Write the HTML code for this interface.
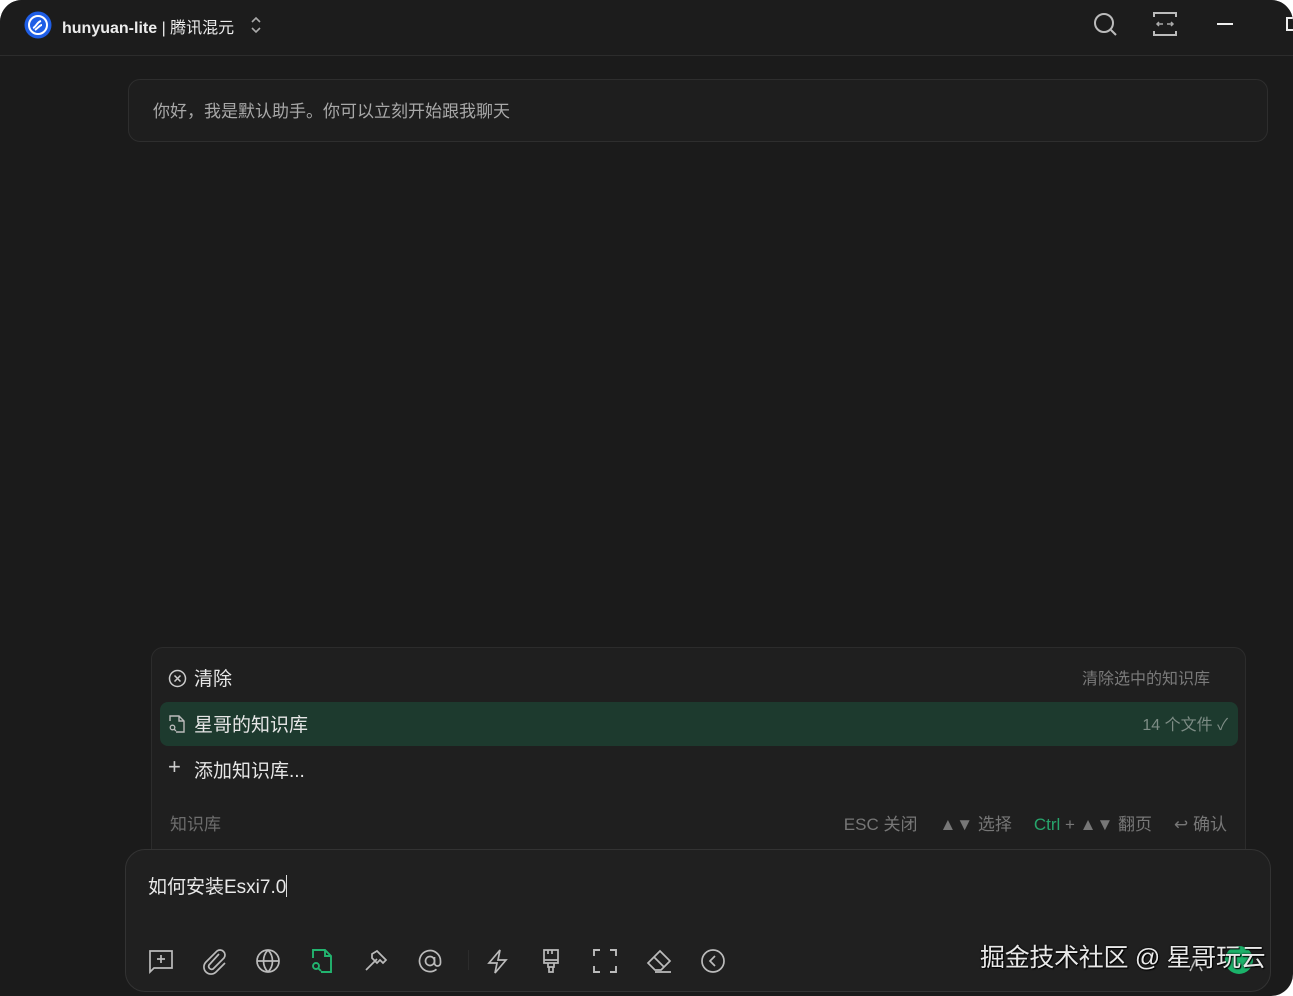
<!DOCTYPE html>
<html><head><meta charset="utf-8"><style>
*{box-sizing:border-box;margin:0;padding:0}
html,body{width:1293px;height:996px;overflow:hidden;background:#fff}
body{font-family:"Liberation Sans","Noto Sans CJK SC",sans-serif;position:relative}
.win{position:absolute;left:0;top:0;width:1293px;height:996px;background:#1b1b1b;border-radius:22px 22px 22px 0;overflow:hidden}
.hdr{position:absolute;left:0;top:0;width:100%;height:56px;border-bottom:1px solid #2c2c2c;background:#1c1c1c}
.abs{position:absolute}
.greet{left:128px;top:79px;width:1140px;height:63px;border:1px solid #2e2e2e;border-radius:12px;background:#1e1e1e;color:#a8a8a8;font-size:17px;padding:17px 24px}
.pop{left:151px;top:647px;width:1095px;height:215px;border:1px solid #2c2c2c;border-radius:12px;background:#1f1f1f}
.row{position:absolute;left:8px;width:1078px;height:44px;border-radius:8px;color:#e6e6e6;font-size:19px}
.sel{background:#1d3a2e}
.inp{left:125px;top:849px;width:1146px;height:143px;border:1px solid #333;border-radius:20px;background:#202020}
.ic{position:absolute;top:947px;width:28px;height:28px}
.g{margin-left:22px}
</style></head><body>
<div class="win">
 <div class="hdr">
  <svg class="abs" style="left:24px;top:11px" width="28" height="28" viewBox="0 0 28 28"><circle cx="14" cy="14" r="13.5" fill="#1f5ee6"/><circle cx="14" cy="14" r="9" fill="none" stroke="#fff" stroke-width="2"/><path d="M9 17c3-1 4-6 8-7M11 19c3-2 5-5 7-5" stroke="#fff" stroke-width="2" fill="none"/></svg>
  <div class="abs" style="left:62px;top:14px;color:#ececec;font-size:16px;font-weight:bold">hunyuan-lite <span style="font-weight:normal">| 腾讯混元</span></div>
  <svg class="abs" style="left:249px;top:15px" width="14" height="20" viewBox="0 0 14 20"><path d="M3 7l4-4 4 4M3 13l4 4 4-4" stroke="#aaa" stroke-width="1.6" fill="none"/></svg>
  <svg class="abs" style="left:1093px;top:12px" width="26" height="26" viewBox="0 0 26 26"><circle cx="11" cy="11" r="9" stroke="#bbb" stroke-width="2" fill="none"/><path d="M18 18l5 5" stroke="#bbb" stroke-width="2"/></svg>
  <svg class="abs" style="left:1152px;top:12px" width="26" height="24" viewBox="0 0 26 24"><path d="M2 5V1h22v4M2 19v4h22v-4" stroke="#bbb" stroke-width="2" fill="none"/><path d="M5 12h6M15 12h6M7 10l-2 2 2 2M19 10l2 2-2 2" stroke="#aaa" stroke-width="1.5" fill="none"/></svg>
  <div class="abs" style="left:1217px;top:23px;width:16px;height:2px;background:#eee"></div>
  <div class="abs" style="left:1286px;top:17px;width:10px;height:14px;border:2px solid #eee"></div>
 </div>
 <div class="abs greet">你好，我是默认助手。你可以立刻开始跟我聊天</div>
 <div class="abs pop">
  <div class="row" style="top:8px">
   <svg class="abs" style="left:8px;top:13px" width="19" height="19" viewBox="0 0 19 19"><circle cx="9.5" cy="9.5" r="8" stroke="#ccc" stroke-width="1.5" fill="none"/><path d="M6.5 6.5l6 6M12.5 6.5l-6 6" stroke="#ccc" stroke-width="1.5"/></svg>
   <span class="abs" style="left:34px;top:8px">清除</span>
   <span class="abs" style="right:28px;top:9px;font-size:16px;color:#7a7a7a">清除选中的知识库</span>
  </div>
  <div class="row sel" style="top:54px">
   <svg class="abs" style="left:8px;top:12px" width="18" height="20" viewBox="0 0 18 20"><path d="M2 7V2h9l5 5v11H8M11 2v5h5" stroke="#bbb" stroke-width="1.4" fill="none"/><circle cx="4.5" cy="13.5" r="2.3" stroke="#bbb" stroke-width="1.3" fill="none"/><path d="M6 15l2 2" stroke="#bbb" stroke-width="1.3"/></svg>
   <span class="abs" style="left:34px;top:8px">星哥的知识库</span>
   <span class="abs" style="right:10px;top:9px;font-size:16px;color:#7d8c85">14 个文件 ✓</span>
  </div>
  <div class="row" style="top:100px">
   <span class="abs" style="left:8px;top:6px;color:#ccc;font-size:22px;font-weight:300">+</span>
   <span class="abs" style="left:34px;top:8px">添加知识库...</span>
  </div>
  <div class="abs" style="left:18px;top:162px;font-size:17px;color:#6d6d6d">知识库</div>
  <div class="abs" style="right:18px;top:162px;font-size:17px;color:#777;white-space:nowrap">ESC 关闭<span class="g">▲▼ 选择</span><span class="g" style="color:#27a56c">Ctrl</span> + ▲▼ 翻页<span class="g">↩ 确认</span></div>
 </div>
 <div class="abs inp">
  <div class="abs" style="left:22px;top:22px;color:#e8e8e8;font-size:19px">如何安装Esxi7.0<span style="display:inline-block;width:1px;height:22px;background:#ddd;vertical-align:-4px"></span></div>
 </div>
 <svg class="ic" style="left:147px" viewBox="0 0 28 28" fill="none" stroke="#bbb" stroke-width="1.7"><path d="M3 25V4h22v17H7z M14 8v8M10 12h8"/></svg>
 <svg class="ic" style="left:201px" viewBox="0 0 28 28" fill="none" stroke="#bbb" stroke-width="1.7"><path d="M18 7L8 18a3 3 0 004 4l11-11a5 5 0 00-7-7L5 15a7 7 0 0010 10l9-9"/></svg>
 <svg class="ic" style="left:254px" viewBox="0 0 28 28" fill="none" stroke="#bbb" stroke-width="1.7"><circle cx="14" cy="14" r="11"/><path d="M3 14h22M14 3c-6 6-6 16 0 22M14 3c6 6 6 16 0 22"/></svg>
 <svg class="ic" style="left:308px" viewBox="0 0 28 28" fill="none" stroke="#22b46f" stroke-width="1.9"><path d="M5 11V3h12l6 6v16H13M17 3v6h6"/><circle cx="8" cy="19" r="3"/><path d="M10 21l3 3"/></svg>
 <svg class="ic" style="left:362px" viewBox="0 0 28 28" fill="none" stroke="#bbb" stroke-width="1.7"><path d="M4 23l11-11M10 7l5-3 9 9-3 3-3-3-3 3-5-5z"/></svg>
 <svg class="ic" style="left:416px" viewBox="0 0 28 28" fill="none" stroke="#bbb" stroke-width="1.7"><circle cx="14" cy="14" r="4.5"/><path d="M18.5 10v6a3 3 0 006 0v-2a10.5 10.5 0 10-4 8.3"/></svg>
 <div class="abs" style="left:468px;top:950px;width:1px;height:20px;background:#2c2c2c"></div>
 <svg class="ic" style="left:484px" viewBox="0 0 28 28" fill="none" stroke="#bbb" stroke-width="1.7"><path d="M16 3L5 16h8l-2 10 11-13h-8z"/></svg>
 <svg class="ic" style="left:537px" viewBox="0 0 28 28" fill="none" stroke="#bbb" stroke-width="1.7"><path d="M7 3h14v13H7zM7 13h14M11 3v4M15 3v4M11 16v4h6v-4M12 20v5h4v-5"/></svg>
 <svg class="ic" style="left:591px" viewBox="0 0 28 28" fill="none" stroke="#bbb" stroke-width="1.9"><path d="M3 9V3h6M19 3h6v6M25 19v6h-6M9 25H3v-6"/></svg>
 <svg class="ic" style="left:645px" viewBox="0 0 28 28" fill="none" stroke="#bbb" stroke-width="1.7"><path d="M10 23L3 16 15 4l10 10-9 9zM9 10l10 10M10 25h16"/></svg>
 <svg class="ic" style="left:699px" viewBox="0 0 28 28" fill="none" stroke="#bbb" stroke-width="1.7"><circle cx="14" cy="14" r="11"/><path d="M16 9l-5 5 5 5"/></svg>
 <svg class="abs" style="left:1187px;top:955px" width="18" height="18" viewBox="0 0 18 18"><path d="M3 16L9 4l6 12" stroke="#bbb" stroke-width="1.6" fill="none"/></svg>
 <div class="abs" style="left:1225px;top:946px;width:28px;height:28px;border-radius:50%;background:#1bb26a"></div>
 <div class="abs" style="left:980px;top:938px;font-size:25px;letter-spacing:-0.3px;color:#e8e8e8;text-shadow:0 0 2px #000,1px 1px 1px #000">掘金技术社区 @ 星哥玩云</div>
</div>
</body></html>
